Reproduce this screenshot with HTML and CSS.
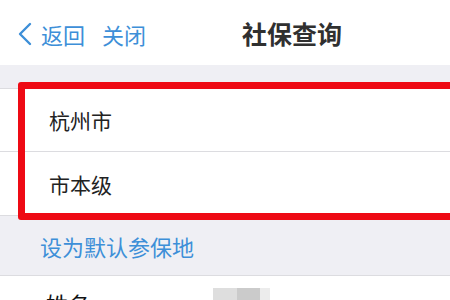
FILE: index.html
```html
<!DOCTYPE html>
<html lang="zh-CN">
<head>
<meta charset="utf-8">
<link rel="stylesheet" href="styles.css">
</head>
<body>
<div class="page">
  <header class="nav">
    <svg class="chev" width="17" height="24" viewBox="0 0 17 24"><path d="M14 2 L4 12 L14 22" fill="none" stroke="#3d8fd8" stroke-width="2.4" stroke-linecap="round" stroke-linejoin="round"/></svg>
    <span class="nav-link back">返回</span>
    <span class="nav-link close">关闭</span>
    <span class="title">社保查询</span>
  </header>
  <div class="gap-top"></div>
  <section class="list">
    <div class="row first">杭州市</div>
    <div class="row">市本级</div>
    <div class="highlight"></div>
  </section>
  <div class="section-action">设为默认参保地</div>
  <section class="list info">
    <div class="row info-row">
      <span class="label">姓名</span>
      <span class="blur"><i class="b1"></i><i class="b2"></i><i class="b3"></i></span>
    </div>
  </section>
</div>
</body>
</html>
```
FILE: styles.css
```css
* { box-sizing: border-box; }
html, body { margin: 0; padding: 0; }
body {
  width: 450px;
  height: 300px;
  overflow: hidden;
  background: #efeff4;
  font-family: "Noto Sans CJK SC", "Noto Sans", sans-serif;
}
.page { position: relative; width: 450px; }
.nav {
  height: 65px;
  background: #fff;
  display: flex;
  align-items: center;
  padding-left: 16px;
  padding-bottom: 0;
}
.chev { flex: none; margin-top: 2px; }
.nav-link {
  color: #3d8fd8;
  font-size: 22px;
  line-height: 1;
  margin-top: 2px;
}
.back { margin-left: 8px; }
.close { margin-left: 17px; }
.title {
  margin-left: 96px;
  font-size: 25px;
  font-weight: 700;
  color: #303030;
  line-height: 1;
  margin-top: 2px;
}
.gap-top { height: 23px; }
.list {
  position: relative;
  background: #fff;
  border-top: 1px solid #dcdce0;
  border-bottom: 1px solid #dcdce0;
}
.row {
  height: 63px;
  display: flex;
  align-items: center;
  padding-left: 49px;
  font-size: 21px;
  color: #222;
}
.row.first { border-bottom: 1px solid #dcdce0; }
.highlight {
  position: absolute;
  left: 18px;
  top: -7px;
  right: -20px;
  bottom: -5px;
  border: 7px solid #ee0a14;
  border-radius: 3px;
}
.section-action {
  height: 59px;
  display: flex;
  align-items: center;
  padding-left: 40px;
  font-size: 22px;
  color: #3d8fd8;
}
.info { border-bottom: none; }
.info-row {
  padding-left: 46px;
  align-items: flex-start;
  padding-top: 16px;
  font-size: 22px;
  color: #111;
}
.label { width: 167px; line-height: 1; }
.blur { display: flex; margin-top: -4px; }
.blur i { display: block; height: 30px; }
.b1 { width: 24px; background: #dedede; }
.b2 { width: 23px; background: #cbcbcb; }
.b3 { width: 10px; background: #ececec; }
```
